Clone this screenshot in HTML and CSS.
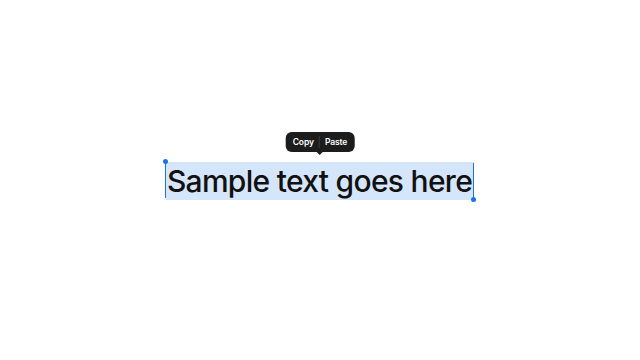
FILE: index.html
```html
<!DOCTYPE html>
<html>
<head>
    <title>Text Selection</title>
    <meta name="viewport" content="width=device-width, initial-scale=1">
    <link rel="stylesheet" href="styles.css">
</head>
<body>
    <div class="stage">
        <div class="selection">
            <div class="menu">
                <span class="item">Copy</span>
                <span class="sep"></span>
                <span class="item">Paste</span>
            </div>
            <span class="handle start"></span>
            <span class="text">Sample text goes here</span>
            <span class="handle end"></span>
        </div>
    </div>
</body>
</html>
```

FILE: styles.css
```css
body {
    margin: 0;
    background-color: #fff;
    font-family: Inter, "Liberation Sans", sans-serif;
}

.stage {
    height: 360px;
    display: flex;
    align-items: center;
    justify-content: center;
}

.selection {
    position: relative;
    margin-top: 1px;
}

.text {
    display: block;
    background-color: #d5e6fb;
    color: #111;
    font-size: 30px;
    font-weight: 500;
    letter-spacing: -0.7px;
    line-height: 38px;
    padding: 0 2px 0 1px;
}

.handle {
    position: absolute;
    width: 1px;
    height: 37px;
    background-color: #1a73e8;
}

.handle::after {
    content: "";
    position: absolute;
    left: -2px;
    width: 5px;
    height: 5px;
    border-radius: 50%;
    background-color: #1a73e8;
}

.handle.start {
    left: -1px;
    top: -1px;
}

.handle.start::after {
    top: -2px;
}

.handle.end {
    right: 0;
    top: 1px;
}

.handle.end::after {
    bottom: -2px;
}

.menu {
    position: absolute;
    bottom: 48px;
    left: 50%;
    transform: translateX(-50%);
    display: flex;
    align-items: center;
    height: 20px;
    padding: 0 7px;
    background-color: #1c1c1c;
    border-radius: 6px;
    color: #fff;
    font-size: 8.5px;
    font-weight: 600;
    letter-spacing: -0.1px;
    white-space: nowrap;
}

.menu::after {
    content: "";
    position: absolute;
    left: 50%;
    bottom: -3px;
    margin-left: -3px;
    border-left: 3px solid transparent;
    border-right: 3px solid transparent;
    border-top: 3px solid #1c1c1c;
}

.sep {
    width: 1px;
    height: 12px;
    margin: 0 5px;
    background-color: #3a3a3a;
}
```
